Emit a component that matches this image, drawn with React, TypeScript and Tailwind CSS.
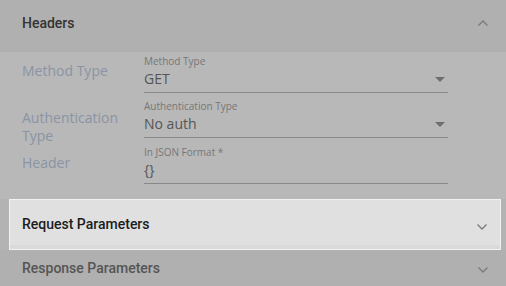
import React from "react";

const Chevron = ({ up }: { up?: boolean }) => (
  <svg width="12" height="8" viewBox="0 0 12 8" className="block">
    <path
      d={up ? "M1.5 6.5 L6 2 L10.5 6.5" : "M1.5 1.5 L6 6 L10.5 1.5"}
      fill="none"
      stroke="#7a7a7a"
      strokeWidth="1.3"
    />
  </svg>
);

const Caret = () => (
  <svg width="10" height="5" viewBox="0 0 10 5" className="block">
    <path d="M0 0 L10 0 L5 5 Z" fill="#6e6e6e" />
  </svg>
);

const Field = ({
  label,
  value,
  select,
}: {
  label: string;
  value: string;
  select?: boolean;
}) => (
  <div className="self-start border-b border-[#888888] pb-[3px]">
    <div className="text-[10px] leading-[12px] text-[#777777]">{label}</div>
    <div className="mt-[2px] flex items-center justify-between pr-[3px]">
      <span className="text-[14px] leading-[20px] text-[#555555]">{value}</span>
      {select && <Caret />}
    </div>
  </div>
);

export default function App() {
  return (
    <div
      className="w-[506px] h-[286px] overflow-hidden bg-[#b8b8b8]"
      style={{ fontFamily: "'Open Sans', 'Liberation Sans', sans-serif" }}
    >
      <div
        className="h-[52px] bg-[#b0b0b0] flex items-center justify-between pl-[22px] pr-[17px] pb-[6px]"
        style={{ fontFamily: "Roboto, 'Liberation Sans', sans-serif" }}
      >
        <span className="text-[14px] font-medium text-[#333333]">Headers</span>
        <Chevron up />
      </div>

      <div className="grid grid-cols-[122px_304px] grid-rows-[45px_46px_38px] pl-[22px] pt-[3px] h-[147px]">
        <div className="pt-[7px] text-[14px] leading-[18px] text-[#8a94a4]">Method Type</div>
        <Field label="Method Type" value="GET" select />
        <div className="pt-[9px] text-[14px] leading-[18px] text-[#8a94a4]">
          Authentication
          <br />
          Type
        </div>
        <Field label="Authentication Type" value="No auth" select />
        <div className="pt-[8px] text-[14px] leading-[18px] text-[#8a94a4]">Header</div>
        <Field label="In JSON Format *" value="{}" />
      </div>

      <div className="h-[51px] bg-[#b3b3b3] pl-[9px] pr-[5px]">
        <div
          className="h-full border-[1.5px] border-[#f2f2f2] bg-[#e0e0e0] flex items-center justify-between pl-[12px] pr-[12px] shadow-[inset_0_-4px_0_#dadada]"
          style={{ fontFamily: "Roboto, 'Liberation Sans', sans-serif" }}
        >
          <span className="text-[14px] font-medium text-[#1c1c1c]">Request Parameters</span>
          <div className="pt-[4px]">
            <Chevron />
          </div>
        </div>
      </div>

      <div
        className="h-[36px] bg-[#b0b0b0] flex items-center justify-between pl-[22px] pr-[17px]"
        style={{ fontFamily: "Roboto, 'Liberation Sans', sans-serif" }}
      >
        <span className="text-[14px] font-medium text-[#555555]">Response Parameters</span>
        <div className="pt-[3px]">
          <Chevron />
        </div>
      </div>
    </div>
  );
}
